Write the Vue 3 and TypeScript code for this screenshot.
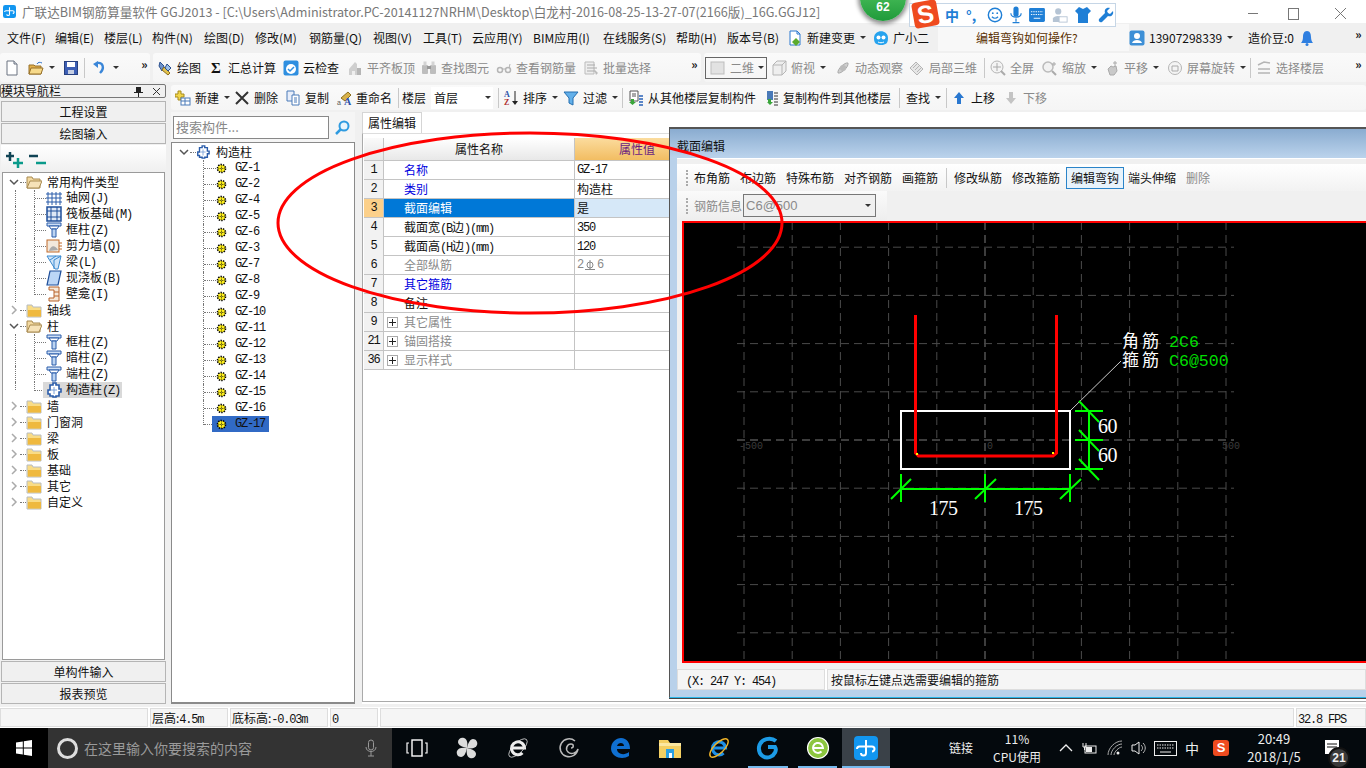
<script setup lang="ts">
type Cell = {
  x: number
  w?: number
  icon?: string
  label?: string
  caret?: boolean
  off?: boolean
  sep?: boolean
  cls?: string
}

const icons: Record<string, string> = {
  newdoc: '<path d="M3 1h7l3 3v11H3z" fill="#fff" stroke="#6b7280"/><path d="M10 1v3h3" fill="#d8dde6" stroke="#6b7280"/>',
  open: '<path d="M1 5h5l1 1h6v8H1z" fill="#e3b04b" stroke="#96702a"/><path d="M3 8h12l-2 6H1z" fill="#f6d98a" stroke="#96702a"/><path d="M9 4c1-2 3-2 5-1" fill="none" stroke="#2a6fc9"/>',
  save: '<rect x="1.5" y="1.5" width="13" height="13" fill="#3d5fb5" stroke="#27407f"/><rect x="4" y="2" width="8" height="5" fill="#fff"/><rect x="5" y="10" width="6" height="4" fill="#c6cfe3"/>',
  undo: '<path d="M5 3c6-1 8 5 3 10" fill="none" stroke="#3a86d8" stroke-width="2.4"/><path d="M1 4l5-3v7z" fill="#3a86d8"/>',
  draw: '<path d="M3 2l4 4-2 5-3-5z" fill="#6f93c9" stroke="#2a4f8d"/><path d="M7 7l6 6-2 2-6-5z" fill="#e2c24e" stroke="#8c6f1f"/><path d="M10 4l4 4-3 3-3-3z" fill="#9cc0e8" stroke="#2a4f8d"/>',
  sigma: '<text x="8" y="13" text-anchor="middle" font-family="Liberation Serif,serif" font-weight="700" font-size="15" fill="#111">Σ</text>',
  cloud: '<rect x="0.5" y="0.5" width="15" height="15" rx="2" fill="#2f8fe0"/><circle cx="8" cy="9" r="5" fill="#fff"/><path d="M5 9l2 2 4-4" fill="none" stroke="#2f8fe0" stroke-width="1.5"/>',
  flat: '<path d="M2 15V9l6-7 2 2v11z" fill="#cfcfcf"/><path d="M10 8h4v7h-4z" fill="#b5b5b5"/><path d="M5 11h3v4H5z" fill="#eee"/>',
  binoc: '<rect x="1" y="5" width="6" height="9" rx="1" fill="#bdbdbd"/><rect x="9" y="5" width="6" height="9" rx="1" fill="#bdbdbd"/><rect x="2.5" y="1.5" width="3" height="4" fill="#d4d4d4"/><rect x="10.5" y="1.5" width="3" height="4" fill="#d4d4d4"/><rect x="6" y="6" width="4" height="3" fill="#999"/>',
  glasses: '<circle cx="4" cy="10" r="2.5" fill="none" stroke="#b5b5b5" stroke-width="1.5"/><circle cx="12" cy="10" r="2.5" fill="none" stroke="#b5b5b5" stroke-width="1.5"/><path d="M6 9h4M13 8l1-4" stroke="#b5b5b5" fill="none"/>',
  batch: '<path d="M2 2h9v12H2z" fill="#eee" stroke="#bbb"/><path d="M4 5h8M4 8h10M4 11h8" stroke="#aaa"/><path d="M11 9l4 4-2 2z" fill="#bbb"/>',
  box: '<path d="M2 5l4-4h9v10l-4 4H2z" fill="#eee" stroke="#b5b5b5"/><path d="M2 5h9v10M11 5l4-4" fill="none" stroke="#b5b5b5"/>',
  orbit: '<path d="M3 13C6 14 14 7 13 3 10 2 2 9 3 13z" fill="#cfcfcf" stroke="#aaa"/><circle cx="8" cy="8" r="3" fill="#bbb"/>',
  local: '<path d="M1 8l6-6 7 7-6 6z" fill="#e6e6e6" stroke="#b5b5b5"/><path d="M4 8l4-4M6 10l4-4M8 12l4-4" stroke="#b5b5b5"/>',
  fit: '<circle cx="7" cy="7" r="6" fill="#f4f4f4" stroke="#b5b5b5"/><path d="M7 3v8M3 7h8" stroke="#aaa"/><path d="M11 11l4 4" stroke="#aaa" stroke-width="2"/>',
  zoom: '<circle cx="6" cy="7" r="5" fill="#f2f2f2" stroke="#bbb" stroke-width="1.5"/><path d="M10 11l4 4" stroke="#aaa" stroke-width="2"/><path d="M12 2v4M10 4h4" stroke="#aaa"/>',
  pan: '<path d="M4 9l3-3 2 1 3-1 1 5-3 4H6z" fill="#c9c9c9" stroke="#aaa"/><path d="M11 1v5M9 3h4" stroke="#aaa"/>',
  rotate: '<circle cx="8" cy="8" r="6.5" fill="#f4f4f4" stroke="#b5b5b5"/><path d="M5 6h6v5H5z" fill="none" stroke="#aaa"/>',
  floors: '<path d="M2 5l6-3 6 1M2 9h12M2 13h12" fill="none" stroke="#b5b5b5" stroke-width="1.5"/>',
  add: '<path d="M3 1h3v3h3v3H6v3H3V7H0V4h3z" fill="#f2d64b" stroke="#a68a1c"/><rect x="6" y="8" width="9" height="7" fill="#fff" stroke="#4a7ab8"/><path d="M6 11h9M10 8v7" stroke="#4a7ab8"/>',
  del: '<path d="M2 2l12 12M14 2L2 14" stroke="#333" stroke-width="2"/>',
  copy: '<path d="M2 1h7v10H2z" fill="#e8eefa" stroke="#4a7ab8"/><path d="M7 5h7v10H7z" fill="#fff" stroke="#4a7ab8"/><path d="M9 8h3M9 10h3M9 12h3" stroke="#4a7ab8"/>',
  rename: '<path d="M5 8l7-6 3 3-6 6z" fill="#d8b24a" stroke="#8c6f1f"/><text x="1" y="15" font-family="Liberation Sans,sans-serif" font-size="7" fill="#555">a</text><text x="8" y="15" font-family="Liberation Serif,serif" font-weight="700" font-size="10" fill="#2a4fa8">A</text>',
  sort: '<text x="1" y="7" font-family="Liberation Serif,serif" font-weight="700" font-size="8" fill="#2a4fa8">A</text><text x="1" y="15" font-family="Liberation Serif,serif" font-weight="700" font-size="8" fill="#b03030">Z</text><path d="M12 1v12" stroke="#222"/><path d="M9 11l3 4 3-4z" fill="#222"/>',
  filter: '<path d="M1 2h14l-5 6v7l-4-2V8z" fill="#63b0ea" stroke="#256fb0"/>',
  cfrom: '<path d="M2 1h8v10H2z" fill="#fff" stroke="#555"/><path d="M4 4h4M4 6h4" stroke="#555"/><path d="M3 9h3v3h2l-3.5 3L1 12h2z" fill="#3aa53a"/><path d="M11 6h4M11 9h4M11 12h4M11 15h4" stroke="#2a62b8" stroke-width="1.5"/>',
  cto: '<rect x="4" y="1" width="6" height="9" fill="#4a7ab8"/><path d="M5 9h3v3h2l-3 3-3-3h1z" fill="#3aa53a"/><path d="M11 3h4M11 6h4M11 9h4M11 12h4M11 15h4" stroke="#333"/>',
  up: '<path d="M8 2l5 6H10v6H6V8H3z" fill="#2a78d0"/>',
  down: '<path d="M8 14l5-6H10V2H6v6H3z" fill="#c4c4c4"/>',
  docnew: '<path d="M3 1h7l3 3v11H3z" fill="#fff" stroke="#2a78d0"/><path d="M10 1v3h3" fill="none" stroke="#2a78d0"/><path d="M9 8l4 4-4 4-4-4z" fill="#5cab2e"/>',
  xiaoer: '<path d="M1 8c0-9 14-9 14 0 0 5-2 7-7 7s-7-2-7-7z" fill="#27a3ee"/><circle cx="5.5" cy="7.5" r="2" fill="#fff"/><circle cx="10.5" cy="7.5" r="2" fill="#fff"/><path d="M5 12c2 1 4 1 6 0" stroke="#fff" fill="none"/>',
  user: '<rect x="0.5" y="0.5" width="15" height="15" rx="2" fill="#3d8fd6"/><circle cx="8" cy="6" r="3" fill="#fff"/><path d="M3 13c1-4 9-4 10 0z" fill="#fff"/>',
  bell: '<path d="M8 1c3 0 4 3 4 6s1 5 2 6H2c1-1 2-3 2-6s1-6 4-6z" fill="#2f7fe0"/><circle cx="8" cy="14.5" r="1.5" fill="#2f7fe0"/>',
  square: '<rect x="1" y="2" width="13" height="12" fill="#e2e2e2" stroke="#bdbdbd"/>',
  grid: '<path d="M2 2v13M6 2v13M10 2v13M14 2v13M0 4h16M0 8h16M0 12h16" stroke="#2a5caa"/>',
  raft: '<rect x="1" y="1" width="14" height="14" fill="#dfe8f6" stroke="#1f4f9a" stroke-width="1.5"/><path d="M1 5h14M1 11h14M5 1v14M11 1v14" stroke="#1f4f9a"/>',
  column: '<path d="M1 1h14v3H1z" fill="#cfe0f6" stroke="#2a5caa"/><path d="M3 4h10l-2 3H5z" fill="#fff" stroke="#2a5caa"/><path d="M6 7h4v8H6z" fill="#bcd4f2" stroke="#2a5caa"/>',
  wall: '<rect x="1" y="2" width="12" height="12" fill="#f2e8dc" stroke="#c06a2a"/><path d="M3 13c2-6 6-6 9-1z" fill="#aaa"/><path d="M13 5h3M13 8h3M13 11h3" stroke="#c06a2a"/>',
  beam: '<path d="M1 2h14l-3 13H9z" fill="#cfe4f8" stroke="#3a8ad0"/><path d="M4 6l6-4M8 15V6l7-4" fill="none" stroke="#3a8ad0"/>',
  slab: '<path d="M4 1h11l-3 14H1z" fill="#bcd6f6" stroke="#1f4f9a" stroke-width="1.2"/>',
  niche: '<path d="M3 1h10v14H3v-3h5V4H3z" fill="#f6e8d8" stroke="#b8622a"/><path d="M8 6h5M8 10h5" stroke="#b8622a"/>',
  puzzle: '<path d="M4 3h3V1h3v2h3v4h2v3h-2v4h-3v1H7v-1H4v-2H2V8h2z" fill="#fff" stroke="#2a5caa" stroke-width="1.6"/><path d="M8 5v7M5 8h6" stroke="#7aa0d8"/>',
  gear: '<circle cx="8" cy="8" r="5.5" fill="#ffef1a" stroke="#000" stroke-width="3" stroke-dasharray="2 1.4"/><circle cx="8" cy="8" r="4.6" fill="#ffef1a"/><path d="M8 3.5v9M3.5 8h9" stroke="#111" stroke-dasharray="1.5 1"/>',
  folderopen: '<path d="M1 3h5l1 2h7v9H1z" fill="#f3d9a0" stroke="#a88a50"/><path d="M4 7h12l-3 7H1z" fill="#f6e2b8" stroke="#a88a50"/>',
}

const cells = (items: Cell[], end: number): Cell[] =>
  items.map((it, i) => ({ ...it, w: (items[i + 1]?.x ?? end) - it.x }))

const menu = cells([
  { x: 7, label: '文件(F)' }, { x: 55, label: '编辑(E)' }, { x: 104, label: '楼层(L)' },
  { x: 152, label: '构件(N)' }, { x: 204, label: '绘图(D)' }, { x: 255, label: '修改(M)' },
  { x: 309, label: '钢筋量(Q)' }, { x: 373, label: '视图(V)' }, { x: 423, label: '工具(T)' },
  { x: 472, label: '云应用(Y)' }, { x: 533, label: 'BIM应用(I)' }, { x: 603, label: '在线服务(S)' },
  { x: 676, label: '帮助(H)' }, { x: 727, label: '版本号(B)' },
  { x: 787, icon: 'docnew', label: '新建变更', caret: true }, { x: 873, icon: 'xiaoer', label: '广小二' },
  { x: 938, label: '编辑弯钩如何操作?', cls: 'ask' },
  { x: 1129, icon: 'user', label: '13907298339', caret: true }, { x: 1248, label: '造价豆:0' },
  { x: 1299, icon: 'bell' }, { x: 1351, label: '»', cls: 'more' },
], 1366)

// three docked groups on the upper toolbar
const tb1 = [
  {
    id: 'file',
    width: 150,
    items: cells([
      { x: 4, icon: 'newdoc' }, { x: 28, icon: 'open', caret: true }, { x: 63, icon: 'save' },
      { x: 84, sep: true }, { x: 92, icon: 'undo', caret: true }, { x: 139, label: '»', cls: 'more' },
    ], 150),
  },
  {
    id: 'draw',
    width: 548,
    items: cells([
      { x: 157, icon: 'draw', label: '绘图' }, { x: 208, icon: 'sigma', label: '汇总计算' },
      { x: 283, icon: 'cloud', label: '云检查' }, { x: 347, icon: 'flat', label: '平齐板顶', off: true },
      { x: 421, icon: 'binoc', label: '查找图元', off: true }, { x: 496, icon: 'glasses', label: '查看钢筋量', off: true },
      { x: 583, icon: 'batch', label: '批量选择', off: true }, { x: 688, label: '»', cls: 'more' },
    ], 701),
  },
  {
    id: 'view',
    width: 663,
    items: cells([
      { x: 705, icon: 'square', label: '二维', caret: true, off: true, cls: 'combo' },
      { x: 771, icon: 'box', label: '俯视', caret: true, off: true }, { x: 835, icon: 'orbit', label: '动态观察', off: true },
      { x: 909, icon: 'local', label: '局部三维', off: true }, { x: 984, sep: true },
      { x: 990, icon: 'fit', label: '全屏', off: true }, { x: 1042, icon: 'zoom', label: '缩放', caret: true, off: true },
      { x: 1104, icon: 'pan', label: '平移', caret: true, off: true }, { x: 1167, icon: 'rotate', label: '屏幕旋转', caret: true, off: true },
      { x: 1250, sep: true }, { x: 1256, icon: 'floors', label: '选择楼层', off: true }, { x: 1351, label: '»', cls: 'more' },
    ], 1366),
  },
]

const tb2 = cells([
  { x: 175, icon: 'add', label: '新建', caret: true }, { x: 234, icon: 'del', label: '删除' },
  { x: 285, icon: 'copy', label: '复制' }, { x: 336, icon: 'rename', label: '重命名' },
  { x: 398, sep: true }, { x: 402, label: '楼层' }, { x: 431, label: '首层', caret: true, cls: 'floor' },
  { x: 498, sep: true }, { x: 503, icon: 'sort', label: '排序', caret: true },
  { x: 563, icon: 'filter', label: '过滤', caret: true }, { x: 622, sep: true },
  { x: 628, icon: 'cfrom', label: '从其他楼层复制构件' }, { x: 763, icon: 'cto', label: '复制构件到其他楼层' },
  { x: 899, sep: true }, { x: 906, label: '查找', caret: true }, { x: 946, sep: true },
  { x: 951, icon: 'up', label: '上移' }, { x: 1003, icon: 'down', label: '下移', off: true },
], 1366)

const dlgTools = cells([
  { x: 694, label: '布角筋' }, { x: 740, label: '布边筋' }, { x: 786, label: '特殊布筋' },
  { x: 844, label: '对齐钢筋' }, { x: 902, label: '画箍筋' }, { x: 946, sep: true },
  { x: 954, label: '修改纵筋' }, { x: 1012, label: '修改箍筋' }, { x: 1066, label: '编辑弯钩', cls: 'active' },
  { x: 1128, label: '端头伸缩' }, { x: 1186, label: '删除', off: true },
], 1366)

type Node = { name: string; key?: string; icon?: string; open?: boolean; cur?: boolean; last?: boolean; guide?: boolean }
const navTree: Node[] = [
  { name: '常用构件类型', open: true },
  { name: '轴网', key: '(J)', icon: 'grid', guide: true },
  { name: '筏板基础', key: '(M)', icon: 'raft', guide: true },
  { name: '框柱', key: '(Z)', icon: 'column', guide: true },
  { name: '剪力墙', key: '(Q)', icon: 'wall', guide: true },
  { name: '梁', key: '(L)', icon: 'beam', guide: true },
  { name: '现浇板', key: '(B)', icon: 'slab', guide: true },
  { name: '壁龛', key: '(I)', icon: 'niche', guide: true, last: true },
  { name: '轴线' },
  { name: '柱', open: true },
  { name: '框柱', key: '(Z)', icon: 'column', guide: true },
  { name: '暗柱', key: '(Z)', icon: 'column', guide: true },
  { name: '端柱', key: '(Z)', icon: 'column', guide: true },
  { name: '构造柱', key: '(Z)', icon: 'puzzle', guide: true, last: true, cur: true },
  { name: '墙' }, { name: '门窗洞' }, { name: '梁' }, { name: '板' },
  { name: '基础' }, { name: '其它' }, { name: '自定义' },
]
const columns = [1, 2, 4, 5, 6, 3, 7, 8, 9, 10, 11, 12, 13, 14, 15, 16, 17].map((n) => `GZ-${n}`)

type Row = { no: number; name: string; value?: string; tone?: string; plus?: boolean; cur?: boolean; mono?: boolean; bar?: boolean }
const rows: Row[] = [
  { no: 1, name: '名称', value: 'GZ-17', tone: 'link', mono: true },
  { no: 2, name: '类别', value: '构造柱', tone: 'link' },
  { no: 3, name: '截面编辑', value: '是', cur: true },
  { no: 4, name: '截面宽(B边)(mm)', value: '350', mono: true },
  { no: 5, name: '截面高(H边)(mm)', value: '120', mono: true },
  { no: 6, name: '全部纵筋', tone: 'dim', bar: true },
  { no: 7, name: '其它箍筋', tone: 'link' },
  { no: 8, name: '备注' },
  { no: 9, name: '其它属性', tone: 'dim', plus: true },
  { no: 21, name: '锚固搭接', tone: 'dim', plus: true },
  { no: 36, name: '显示样式', tone: 'dim', plus: true },
]
// ascii runs use the half-width face
const parts = (s: string) =>
  s.split(/([\x20-\x7e]+)/).filter(Boolean).map((t) => ({ t, mono: /^[\x20-\x7e]/.test(t) }))

const gridX = Array.from({ length: 11 }, (_, i) => 985 + (i - 5) * 48.2)
const gridY = Array.from({ length: 9 }, (_, i) => 440 + (i - 4) * 48.2)

const apps = [
  { w: 49, icon: 'taskview' }, { w: 51, icon: 'fan' }, { w: 51, icon: 'ieblack' }, { w: 51, icon: 'swirl' },
  { w: 52, icon: 'edge' }, { w: 48, icon: 'files' }, { w: 49, icon: 'iecolor' }, { w: 50, icon: 'g', run: true },
  { w: 49, icon: 'greene', run: true }, { w: 48, icon: 'glodon', active: true },
]
const petal = 'M12 12C7 11 3 9 3 6s3-5 6-4 4 5 3 10z'
const appIcons: Record<string, string> = {
  taskview: '<rect x="7" y="4" width="10" height="16" fill="none" stroke="#fff" stroke-width="1.4"/><path d="M4 7H2v10h2M20 7h2v10h-2" fill="none" stroke="#fff" stroke-width="1.2"/>',
  fan: [0, 90, 180, 270].map((a) => `<path d="${petal}" fill="#dcdcdc" transform="rotate(${a} 12 12)"/>`).join(''),
  ieblack: '<path d="M5.5 12h13a6.500 6.500 0 1 0-2 5" fill="none" stroke="#eee" stroke-width="3"/><ellipse cx="12" cy="12" rx="12" ry="5" transform="rotate(-45 12 12)" fill="none" stroke="#ddd" stroke-width="0.8"/>',
  swirl: '<path d="M18 5a9 9 0 1 0 3 8c-1 4-7 6-10 3s-1-8 3-8c3 0 3 4 0 4" fill="none" stroke="#bbb" stroke-width="1.5"/>',
  edge: '<path d="M3 13C3 6 8 2 13 2c6 0 9 5 9 11H9c0 5 7 7 12 3v4c-6 4-17 2-18-7zm6-3h7c0-4-6-4-7 0z" fill="#0f6fd1"/>',
  files: '<path d="M1 4h9l2 3h11v15H1z" fill="#f4cf62"/><path d="M1 7h22v3H1z" fill="#fbe7a1"/><rect x="8" y="13" width="8" height="9" fill="#2a9fe3"/><rect x="11" y="17" width="3" height="5" fill="#fff"/>',
  iecolor: '<path d="M5.5 12h13a6.500 6.500 0 1 0-2 5" fill="none" stroke="#1e90e6" stroke-width="3.2"/><ellipse cx="12" cy="12" rx="12" ry="5" transform="rotate(-45 12 12)" fill="none" stroke="#f0b429" stroke-width="1.4"/>',
  g: '<path d="M20 5C15 1 5 2 3 11c-1 8 6 12 11 10 5-2 7-7 5-10h-7" fill="none" stroke="#1c9be6" stroke-width="4"/>',
  greene: '<circle cx="12" cy="12" r="10.5" fill="#8cc63f" stroke="#fff" stroke-width="1.2"/><path d="M7 12h10a5 5 0 1 0-1.500 3.500" fill="none" stroke="#fff" stroke-width="2"/>',
  glodon: '<rect x="0" y="0" width="24" height="24" rx="4" fill="#1296f0"/><path d="M12 4v13a2.500 2.500 0 0 1-5 0M3 13a2.500 2.500 0 0 1 2.500-2.500H18a2.500 2.500 0 0 1 0 5" fill="none" stroke="#fff" stroke-width="2"/>',
}
</script>

<template>
  <div class="screen">
    <div class="title">
      <svg class="logo" viewBox="0 0 24 24" v-html="appIcons.glodon" />
      <span>广联达BIM钢筋算量软件 GGJ2013 - [C:\Users\Administrator.PC-20141127NRHM\Desktop\白龙村-2016-08-25-13-27-07(2166版)_16G.GGJ12]</span>
      <div class="win-btns">
        <i class="w-min" />
        <i class="w-max" />
        <svg width="13" height="13" viewBox="0 0 13 13"><path d="M1 1l11 11M12 1L1 12" stroke="#777" /></svg>
      </div>
    </div>

    <div class="menu">
      <div v-for="it in menu" :key="it.x" class="tool" :class="[it.cls, { off: it.off }]" :style="{ width: it.w + 'px' }">
        <svg v-if="it.icon" class="ic" viewBox="0 0 16 16" v-html="icons[it.icon]" />
        <span v-if="it.label">{{ it.label }}</span>
        <b v-if="it.caret" class="caret" />
      </div>
    </div>

    <div class="tools">
      <div v-for="g in tb1" :key="g.id" class="grp" :class="g.id" :style="{ width: g.width + 'px' }">
        <div v-for="it in g.items" :key="it.x" class="tool" :class="[it.cls, { off: it.off }]" :style="{ width: it.w + 'px' }">
          <i v-if="it.sep" class="sep" />
          <svg v-if="it.icon" class="ic" viewBox="0 0 16 16" v-html="icons[it.icon]" />
          <span v-if="it.label">{{ it.label }}</span>
          <b v-if="it.caret" class="caret" />
        </div>
      </div>
    </div>

    <div class="main">
      <aside class="nav">
        <div class="nav-head">
          <span>模块导航栏</span>
          <span class="nav-pin">
            <svg width="9" height="11" viewBox="0 0 9 11"><path d="M2 1h5v5h2v1H5v4H4V7H0V6h2z" fill="#222" /></svg>
            <svg width="9" height="9" viewBox="0 0 9 9"><path d="M1 1l7 7M8 1L1 8" stroke="#333" /></svg>
          </span>
        </div>
        <div class="nav-btn">工程设置</div>
        <div class="nav-btn">绘图输入</div>
        <div class="nav-strip">
          <svg width="17" height="16" viewBox="0 0 17 16"><path d="M4 0v9M0 4h8" stroke="#145" stroke-width="2.5" /><path d="M12 6v10M7 11h10" stroke="#0a9a8a" stroke-width="2.5" /></svg>
          <svg width="17" height="16" viewBox="0 0 17 16"><path d="M0 4h9" stroke="#145" stroke-width="2.5" /><path d="M7 11h10" stroke="#0a9a8a" stroke-width="2.5" /></svg>
        </div>
        <div class="nav-tree">
          <div v-for="(n, i) in navTree" :key="i" class="row" :class="{ leaf: n.guide }">
            <template v-if="n.guide">
              <i class="guide" :class="{ end: n.last && n.cur }" />
              <i class="branch" :class="{ end: n.last }"><i /></i>
              <span class="leaf-body" :class="{ cur: n.cur }">
                <svg class="ic" viewBox="0 0 16 16" v-html="icons[n.icon!]" />
                <span class="name">{{ n.name }}<span class="mono">{{ n.key }}</span></span>
              </span>
            </template>
            <template v-else>
              <svg class="chev" width="10" height="10" viewBox="0 0 10 10">
                <path :d="n.open ? 'M1 3l4 4 4-4' : 'M3 1l4 4-4 4'" fill="none" :stroke="n.open ? '#555' : '#aaa'" stroke-width="1.5" />
              </svg>
              <i class="stub" />
              <svg v-if="n.open" class="ic" viewBox="0 0 16 16" v-html="icons.folderopen" />
              <svg v-else class="ic" viewBox="0 0 16 16"><path d="M1 3h5l1 2h8v10H1z" fill="#f9dc86" stroke="#b8bcc0" /><path d="M2 8h13v6.5H2z" fill="#efb93f" /></svg>
              <span class="name">{{ n.name }}</span>
            </template>
          </div>
        </div>
        <div class="nav-btn">单构件输入</div>
        <div class="nav-btn">报表预览</div>
      </aside>

      <div class="work">
        <div class="grp second">
          <div v-for="it in tb2" :key="it.x" class="tool" :class="[it.cls, { off: it.off }]" :style="{ width: it.w + 'px' }">
            <i v-if="it.sep" class="sep" />
            <svg v-if="it.icon" class="ic" viewBox="0 0 16 16" v-html="icons[it.icon]" />
            <span v-if="it.label">{{ it.label }}</span>
            <b v-if="it.caret" class="caret" />
          </div>
        </div>
        <div class="panes">
          <section class="list">
            <div class="search">
              <div class="search-box">搜索构件...</div>
              <svg width="17" height="17" viewBox="0 0 17 17"><circle cx="10" cy="7" r="4.5" fill="#e8f5fd" stroke="#2f9be0" stroke-width="2" /><path d="M7 10l-5 5" stroke="#2f9be0" stroke-width="2.5" /></svg>
            </div>
            <div class="list-tree">
              <div class="row">
                <svg class="chev" width="10" height="10" viewBox="0 0 10 10"><path d="M1 3l4 4 4-4" fill="none" stroke="#555" stroke-width="1.5" /></svg>
                <i class="stub" />
                <svg class="ic" viewBox="0 0 16 16" v-html="icons.puzzle" />
                <span class="name">构造柱</span>
              </div>
              <div v-for="(c, i) in columns" :key="c" class="row col-row">
                <i class="branch" :class="{ end: i === columns.length - 1 }"><i /></i>
                <span class="col-body" :class="{ cur: i === columns.length - 1 }">
                  <svg class="gear" viewBox="0 0 16 16" v-html="icons.gear" />
                  <span class="mono">{{ c }}</span>
                </span>
              </div>
            </div>
          </section>

          <section class="props">
            <div class="tab">属性编辑</div>
            <div class="sheet">
              <div class="sheet-row head">
                <div class="no" />
                <div class="name-cell">属性名称</div>
                <div class="val-cell">属性值</div>
              </div>
              <div v-for="r in rows" :key="r.no" class="sheet-row" :class="[r.tone, { cur: r.cur }]">
                <div class="no mono">{{ r.no }}</div>
                <div class="name-cell">
                  <i v-if="r.plus" class="plus" />
                  <span><span v-for="p in parts(r.name)" :key="p.t" :class="{ mono: p.mono }">{{ p.t }}</span></span>
                </div>
                <div class="val-cell" :class="{ mono: r.mono }">
                  <template v-if="r.bar">
                    <span class="mono">2</span>
                    <svg width="12" height="10" viewBox="0 0 12 10"><circle cx="6" cy="5" r="3" fill="none" stroke="#888" /><path d="M6 0v10M1 9.5h10" stroke="#888" /></svg>
                    <span class="mono">6</span>
                  </template>
                  <template v-else>{{ r.value }}</template>
                </div>
              </div>
            </div>
          </section>
        </div>
      </div>
    </div>

    <div class="status">
      <div class="st s0" />
      <div class="st s1">层高:<span class="mono">4.5m</span></div>
      <div class="st s2">底标高:<span class="mono">-0.03m</span></div>
      <div class="st s3"><span class="mono">0</span></div>
      <div class="st s4" />
      <div class="st s5"><span class="mono">32.8 FPS</span></div>
    </div>

    <div class="taskbar">
      <div class="start">
        <svg width="16" height="16" viewBox="0 0 16 16"><path d="M0 2.5l6.8-1v6H0zM7.8 1.3L16 0v7.500H7.800zM0 8.500h6.800v6l-6.800-1zM7.800 8.500H16V16l-8.200-1.300z" fill="#fff" /></svg>
      </div>
      <div class="cortana">
        <i class="ring" />
        <span>在这里输入你要搜索的内容</span>
        <svg class="mic" width="12" height="18" viewBox="0 0 12 18"><rect x="3.5" y="1" width="5" height="10" rx="2.5" fill="none" stroke="#999" /><path d="M1 8c0 6 10 6 10 0M6 13v4M3 17h6" fill="none" stroke="#999" /></svg>
      </div>
      <div v-for="a in apps" :key="a.icon" class="app" :class="{ run: a.run, active: a.active }" :style="{ width: a.w + 'px' }">
        <svg width="24" height="24" viewBox="0 0 24 24" v-html="appIcons[a.icon]" />
      </div>
      <div class="tray">
        <span class="t-link">链接</span>
        <div class="t-cpu"><span>11%</span><span>CPU使用</span></div>
        <svg class="t-i" width="14" height="16" viewBox="0 0 14 16"><path d="M1 11l6-6 6 6" fill="none" stroke="#eee" stroke-width="1.3" /></svg>
        <svg class="t-i bat" width="16" height="16" viewBox="0 0 16 16"><rect x="4" y="6" width="11" height="7" fill="none" stroke="#eee" /><rect x="5" y="7" width="6" height="5" fill="#eee" /><path d="M2 3v4h3V3M3.5 7v3" stroke="#eee" fill="none" /></svg>
        <svg class="t-i" width="16" height="16" viewBox="0 0 16 16"><path d="M1 15C1 8 8 1 15 1M4 15c0-5 6-11 11-11M7 15c0-3 5-8 8-8" fill="none" stroke="#aaa" /><circle cx="11" cy="13" r="1.5" fill="#eee" /></svg>
        <svg class="t-i" width="16" height="16" viewBox="0 0 16 16"><path d="M1 5h3l4-3v12l-4-3H1z" fill="none" stroke="#eee" /><path d="M10 5c2 2 2 4 0 6M12 3c3 3 3 7 0 10" fill="none" stroke="#bbb" /></svg>
        <svg class="t-i kb" width="23" height="15" viewBox="0 0 23 15"><rect x="0.5" y="0.5" width="22" height="14" fill="none" stroke="#eee" /><path d="M3 4h17M3 7h17" stroke="#eee" stroke-dasharray="1.5 1" /><path d="M6 11h11" stroke="#eee" /></svg>
        <span class="t-zh">中</span>
        <span class="t-s">S</span>
        <div class="t-clock"><span>20:49</span><span>2018/1/5</span></div>
        <div class="t-note">
          <svg width="14" height="14" viewBox="0 0 14 14"><path d="M0 0h14v14H0z" fill="#fff" /><path d="M2 4h10M2 7h10" stroke="#111" /></svg>
          <b>21</b>
        </div>
      </div>
    </div>

    <!-- floating section editor window -->
    <div class="dialog">
      <div class="dlg-title">截面编辑</div>
      <div class="dlg-body">
        <div class="dlg-bar">
          <i class="grip" />
          <div v-for="it in dlgTools" :key="it.x" class="tool" :class="[it.cls, { off: it.off }]" :style="{ width: it.w + 'px' }">
            <i v-if="it.sep" class="sep" />
            <span v-if="it.label">{{ it.label }}</span>
          </div>
        </div>
        <div class="dlg-bar info">
          <i class="grip" />
          <span>钢筋信息</span>
          <div class="rebar-combo">C6@500<b class="caret" /></div>
        </div>
        <div class="canvas">
          <svg width="682" height="438" viewBox="684 223 682 438">
            <g fill="none" stroke="#4b4b4b" stroke-dasharray="8 5">
              <path v-for="x in gridX" :key="x" :d="`M${x} 222V660`" :stroke="x === 985 ? '#7a7a7a' : undefined" />
              <path v-for="y in gridY" :key="y" :d="`M737 ${y}H1234`" :stroke="y === 440 ? '#7a7a7a' : undefined" />
            </g>
            <g class="axis">
              <text x="739" y="449">-500</text>
              <text x="987" y="449">0</text>
              <text x="1222" y="449">500</text>
            </g>
            <rect x="901" y="411" width="169" height="58" fill="none" stroke="#fff" stroke-width="2" />
            <path d="M915.5 315V453L918.5 456H1053L1056.5 453V315" fill="none" stroke="#f00" stroke-width="3" />
            <path d="M916 453h2v2h-2zM1052 452h2v2h-2z" fill="#ff0" />
            <path d="M1071 410L1121 361" stroke="#fff" stroke-width="0.8" />
            <g fill="none" stroke="#0f0" stroke-width="2">
              <path d="M1089 411V469M1075 411H1103M1075 440H1103M1075 469H1103M1079 401L1099 422M1079 430L1099 451M1079 459L1099 480" />
              <path d="M901 489H1070M901 474V502M985 474V502M1070 474V502M891 499L911 479M975 499L996 479M1060 499L1081 479" />
            </g>
            <g class="note">
              <text x="1122" y="347">角筋</text>
              <text x="1122" y="366">箍筋</text>
              <text class="mark" x="1169" y="347">2C6</text>
              <text class="mark" x="1169" y="366">C6@500</text>
            </g>
            <g class="dims">
              <text x="1098" y="433">60</text>
              <text x="1098" y="462">60</text>
              <text x="929" y="515">175</text>
              <text x="1014" y="515">175</text>
            </g>
          </svg>
        </div>
        <div class="dlg-status">
          <div class="ds-a"><span class="mono">(X: 247 Y: 454)</span></div>
          <div class="ds-b">按鼠标左键点选需要编辑的箍筋</div>
        </div>
      </div>
    </div>

    <!-- hand-drawn annotation over the screenshot -->
    <svg class="scribble" width="1366" height="768" viewBox="0 0 1366 768">
      <ellipse cx="530" cy="223" rx="252" ry="90" fill="none" stroke="#f00" stroke-width="3" />
    </svg>

    <div class="badge">62</div>

    <div class="ime">
      <span class="ime-s">S</span>
      <span class="ime-zh">中</span>
      <span class="ime-dot">°,</span>
      <svg width="16" height="16" viewBox="0 0 18 18"><circle cx="9" cy="9" r="7.5" fill="none" stroke="#1f7fd6" stroke-width="1.6" /><circle cx="6.5" cy="7" r="1" fill="#1f7fd6" /><circle cx="11.5" cy="7" r="1" fill="#1f7fd6" /><path d="M5.5 11c2 2 5 2 7 0" fill="none" stroke="#1f7fd6" stroke-width="1.3" /></svg>
      <svg width="12" height="18" viewBox="0 0 14 20"><rect x="4" y="0" width="6" height="12" rx="3" fill="#1f7fd6" /><path d="M1 8c0 6 12 6 12 0M7 14v4M3 19h8" fill="none" stroke="#1f7fd6" stroke-width="1.4" /></svg>
      <svg width="16" height="14" viewBox="0 0 17 15"><rect width="17" height="15" rx="1.5" fill="#1f7fd6" /><path d="M2 4h13M2 7h13" stroke="#fff" stroke-dasharray="1.5 1" /><path d="M5 11h7" stroke="#fff" /></svg>
      <svg width="16" height="16" viewBox="0 0 18 18"><circle cx="7" cy="5" r="3.5" fill="#b5c4d4" /><path d="M1 13c1-4 10-4 11 0v4H1z" fill="#b5c4d4" /><rect x="8" y="11" width="9" height="6" fill="#fff" stroke="#b5c4d4" /></svg>
      <svg width="16" height="16" viewBox="0 0 16 16"><path d="M4 0l4 2 4-2 4 4-3 3v9H3V7L0 4z" fill="#1f7fd6" /></svg>
      <svg width="16" height="16" viewBox="0 0 16 16"><path d="M15 4l-3 3-2-1-1-2 3-3C8 0 6 3 7 6L1 12c-1 2 1 4 3 3l6-6c3 1 6-1 5-5z" fill="#1f7fd6" /></svg>
    </div>
  </div>
</template>

<style scoped>
.screen {
  position: relative;
  width: 1366px;
  height: 768px;
  display: flex;
  flex-direction: column;
  overflow: hidden;
  background: #f0f0f0;
  color: #111;
  font: 12px/16px "Noto Sans CJK SC", "Liberation Sans", sans-serif;
}
i { display: block; font-style: normal; }
.mono { font-family: "Liberation Mono", "Noto Sans CJK SC", monospace; font-size: 12px; letter-spacing: -1.2px; }

.title {
  height: 23px;
  flex: none;
  display: flex;
  align-items: center;
  padding-left: 3px;
  gap: 6px;
  background: #fff;
  color: #777;
  font-size: 12.6px;
  white-space: nowrap;
}
.logo { width: 13px; height: 13px; }
.win-btns {
  position: absolute;
  right: 19px;
  top: 7px;
  display: flex;
  align-items: center;
  gap: 30px;
}
.w-min { width: 10px; height: 1px; background: #777; }
.w-max { width: 9px; height: 10px; border: 1px solid #777; margin-right: 5px; }

.menu, .tools {
  display: flex;
  align-items: center;
  flex: none;
  box-sizing: border-box;
}
.menu { height: 29px; padding-left: 7px; }
.tools { height: 31px; gap: 3px; }

.grp {
  height: 29px;
  flex: none;
  display: flex;
  align-items: center;
  box-sizing: border-box;
  border-radius: 3px;
  background: linear-gradient(#fafafa, #f5f5f5);
}
.grp.file { padding-left: 4px; }
.grp.draw { padding-left: 4px; }
.grp.view { padding-left: 1px; }
.grp.second { height: 25px; margin: 2px 0 0 3px; padding-left: 4px; }

.tool {
  height: 22px;
  flex: none;
  display: flex;
  align-items: center;
  gap: 4px;
  white-space: nowrap;
  box-sizing: border-box;
}
.tool.off { color: #8a8a8a; }
.tool.more { font-weight: 700; justify-content: center; margin-top: -8px; }
.tool.ask { background: #f8f8f8; height: 27px; padding-left: 38px; color: #5a3000; }
.tool.combo {
  border: 1px solid #666;
  padding: 0 5px 0 4px;
  margin-right: 4px;
  max-width: 62px;
}
.tool.combo .caret { margin-left: auto; }
.tool.floor { background: #fff; padding-left: 3px; max-width: 62px; margin-right: 5px; }
.tool.floor .caret { margin-left: auto; margin-right: 2px; }
.tool.active { border: 1px solid #2a84c9; background: #e8f3fb; justify-content: center; max-width: 58px; margin-right: 4px; }

.ic { width: 16px; height: 16px; flex: none; }
.caret {
  width: 0;
  height: 0;
  margin-left: 1px;
  border: 3px solid transparent;
  border-top: 3px solid #333;
  border-bottom: 0;
}
.sep { width: 1px; height: 20px; background: #c8c8c8; }

.main { flex: 1; display: flex; min-height: 0; }

.nav { width: 168px; flex: none; display: flex; flex-direction: column; padding: 0 2px 3px 1px; box-sizing: border-box; }
.nav-head {
  height: 14px;
  margin: 1px 0 0 -1px;
  line-height: 12px;
  padding-right: 4px;
  box-sizing: border-box;
  flex: none;
  display: flex;
  justify-content: space-between;
  align-items: center;
  border: 1px solid #777;
  border-radius: 2px;
}
.nav-pin { display: flex; gap: 9px; align-items: center; }
.nav-btn {
  height: 21px;
  margin-top: 1px;
  line-height: 19px;
  box-sizing: border-box;
  text-align: center;
  background: #f0f0f0;
  border: 1px solid #b5b5b5;
  flex: none;
}
.nav-head + .nav-btn { margin-top: 3px; }
.nav-strip {
  height: 26px;
  margin-top: 1px;
  padding: 3px 0 0 5px;
  box-sizing: border-box;
  flex: none;
  display: flex;
  gap: 6px;
  align-items: center;
  background: linear-gradient(#fff, #f0f0f0);
}
.nav-tree {
  flex: 1;
  margin: 1px 1px 0 1px;
  padding-top: 1px;
  background: #fff;
  border: 1px solid #9a9a9a;
  min-height: 0;
}

.row { height: 16px; display: flex; align-items: center; padding-left: 6px; white-space: nowrap; }
.chev { flex: none; }
.stub { width: 6px; margin-left: 1px; border-top: 1px dotted #777; flex: none; }
.row .name { margin-left: 5px; }
.row.leaf { padding-left: 12px; }
.row.leaf .name { margin-left: 4px; }
.guide { width: 19px; height: 16px; border-left: 1px dotted #777; box-sizing: border-box; flex: none; }
.guide.end { height: 8px; align-self: flex-start; }
.branch { width: 12px; height: 16px; border-left: 1px dotted #777; box-sizing: border-box; flex: none; align-self: flex-start; }
.branch i { height: 8px; border-bottom: 1px dotted #777; }
.branch.end { height: 9px; }
.leaf-body { display: flex; align-items: center; height: 16px; flex: none; }
.leaf-body.cur { background: #d9d9d9; padding-right: 2px; margin-left: -3px; padding-left: 3px; }

.work { flex: 1; display: flex; flex-direction: column; min-width: 0; }
.panes { flex: 1; display: flex; min-height: 0; padding: 2px 0 3px 3px; }

.list { width: 184px; flex: none; display: flex; flex-direction: column; margin-right: 7px; }
.search { height: 30px; flex: none; display: flex; align-items: center; padding: 3px 0 2px 2px; box-sizing: border-box; gap: 5px; background: #f5f5f5; }
.search-box {
  width: 152px;
  height: 21px;
  line-height: 19px;
  padding-left: 2px;
  background: #fff;
  border: 1px solid #888;
  color: #888;
  font-size: 13px;
}
.list-tree { flex: 1; background: #fff; border: 1px solid #8a8a8a; border-bottom-width: 2px; padding-top: 1px; min-height: 0; }
.list-tree .row { padding-left: 7px; }
.list-tree .row .ic { width: 14px; height: 14px; }
.list-tree .name { margin-left: 6px; }
.list-tree .col-row { padding-left: 31px; }
.col-row .branch { width: 13px; }
.col-body { display: flex; align-items: center; gap: 8px; height: 16px; padding-right: 4px; margin-left: -4px; padding-left: 4px; }
.col-body.cur { background: #316ac5; }
.gear { width: 11px; height: 11px; flex: none; }

.props { flex: 1; min-width: 0; display: flex; flex-direction: column; background: #fff; }
.tab {
  width: 58px;
  height: 20px;
  line-height: 20px;
  text-align: center;
  border: 1px solid #d5d5d5;
  border-bottom: 0;
  flex: none;
}
.sheet {
  flex: 1;
  margin-bottom: 2px;
  border-top: 1px solid #ddd;
  border-left: 1px solid #aaa;
  border-bottom: 1px solid #aaa;
  padding: 4px 0 0 1px;
}
.sheet-row {
  height: 19px;
  display: grid;
  grid-template-columns: 20px 191px 1fr;
  border-bottom: 1px solid #c4c4c4;
  box-sizing: border-box;
  line-height: 18px;
}
.sheet-row.head { height: 23px; line-height: 22px; }
.no {
  background: #f2f2f2;
  border-right: 1px solid #c4c4c4;
  text-align: center;
}
.name-cell { padding-left: 20px; border-right: 1px solid #c4c4c4; display: flex; align-items: center; }
.val-cell { padding-left: 2px; display: flex; align-items: center; gap: 1px; }
.head .no { background: linear-gradient(#fafafa, #e6e6e6); }
.head .name-cell { justify-content: center; padding: 0; background: linear-gradient(#fff, #e8e8e8); }
.head .val-cell { padding-left: 44px; color: #6a1b80; background: linear-gradient(#fbdc9e, #f2bd62); }
.sheet-row.link .name-cell { color: #0000e0; }
.sheet-row.dim .name-cell, .sheet-row.dim .val-cell { color: #8a8a8a; }
.sheet-row.cur .no { background: #fcd08a; }
.sheet-row.cur .name-cell { background: #0078d7; color: #fff; }
.sheet-row.cur .val-cell { background: #d6e8f8; }
.plus {
  width: 11px;
  height: 11px;
  margin-left: -17px;
  margin-right: 6px;
  border: 1px solid #aaa;
  background:
    linear-gradient(#222, #222) center / 7px 1px no-repeat,
    linear-gradient(#222, #222) center / 1px 7px no-repeat,
    #fff;
  box-sizing: border-box;
}

.status { height: 21px; flex: none; display: flex; gap: 2px; padding-top: 1px; box-sizing: border-box; background: #fff; }
.st { height: 19px; line-height: 18px; background: #f5f5f5; border: 1px solid #ddd; box-sizing: border-box; flex: none; padding-left: 1px; white-space: nowrap; }
.s0 { width: 148px; }
.s1 { width: 78px; }
.s2 { width: 98px; }
.s3 { width: 48px; }
.s4 { width: 914px; }
.s5 { width: 70px; }

.taskbar { height: 40px; flex: none; display: flex; background: #04090d; color: #eee; }
.start { width: 48px; flex: none; display: flex; align-items: center; justify-content: center; background: #000; }
.cortana {
  width: 344px;
  flex: none;
  display: flex;
  align-items: center;
  gap: 6px;
  padding-left: 9px;
  box-sizing: border-box;
  background: #333;
  color: #9a9a9a;
  font-size: 14px;
}
.ring { width: 15px; height: 15px; border: 3px solid #ddd; border-radius: 50%; }
.mic { margin-left: 107px; }
.app { position: relative; height: 40px; flex: none; display: flex; align-items: center; justify-content: center; box-sizing: border-box; }
.app.run::after {
  content: "";
  position: absolute;
  left: 5px;
  right: 5px;
  bottom: 0;
  height: 2px;
  background: #76b9ed;
}
.app.active { background: #3a4148; box-shadow: inset 0 -2px 0 #76b9ed; }
.tray { flex: 1; display: flex; align-items: center; position: relative; }
.t-link { margin-left: 59px; width: 46px; flex: none; }
.t-cpu, .t-clock { display: flex; flex-direction: column; align-items: center; line-height: 18px; flex: none; white-space: nowrap; }
.t-cpu { width: 44px; margin-right: 20px; }
.t-i { margin-right: 8px; flex: none; }
.t-i.bat { margin-right: 10px; }
.t-i.kb { margin: 0 8px 0 -1px; }
.t-zh { width: 16px; margin-right: 12px; font-size: 14px; flex: none; }
.t-s {
  width: 16px;
  height: 16px;
  flex: none;
  text-align: center;
  border-radius: 3px;
  background: #ef4b1f;
  color: #fff;
  font: 700 13px/16px "Liberation Sans", sans-serif;
}
.t-clock { width: 62px; margin-left: 14px; font-size: 13px; }
.t-note { position: relative; margin-left: 20px; }
.t-note b {
  position: absolute;
  left: 3px;
  top: 7px;
  width: 22px;
  height: 22px;
  border-radius: 50%;
  background: #3a3a3a;
  border: 2px solid #111;
  box-sizing: border-box;
  text-align: center;
  font: 700 12px/18px "Liberation Sans", sans-serif;
}

.dialog {
  position: absolute;
  left: 669px;
  top: 127px;
  width: 697px;
  height: 571px;
  display: flex;
  flex-direction: column;
  box-sizing: border-box;
  border-top: 2px solid #555;
  border-left: 1px solid #555;
  border-bottom: 1px solid #29b6e8;
  background: #b9d1ea;
  box-shadow: 0 1px 0 #444;
}
.dlg-title {
  height: 29px;
  flex: none;
  padding: 9px 0 0 7px;
  box-sizing: border-box;
  background: linear-gradient(#8aacd0, #bbd3ec);
}
.dlg-body { flex: 1; margin: 0 0 7px 7px; display: flex; flex-direction: column; background: #f0f0f0; border-top: 1px solid #fff; padding-top: 5px; min-height: 0; }
.dlg-bar {
  height: 27px;
  flex: none;
  display: flex;
  align-items: center;
  background: linear-gradient(#fff, #f2f2f2);
  padding-left: 9px;
}
.dlg-bar.info { height: 29px; width: 201px; color: #8a8a8a; background: linear-gradient(#fafafa, #eee); }
.grip { width: 2px; height: 16px; margin-right: 6px; flex: none; border-left: 2px dotted #aaa; box-sizing: border-box; }
.rebar-combo {
  width: 133px;
  height: 23px;
  margin-left: 1px;
  padding: 0 4px 0 2px;
  flex: none;
  display: flex;
  align-items: center;
  justify-content: space-between;
  box-sizing: border-box;
  border: 1px solid #777;
  background: #f0f0f0;
  font-family: "Liberation Sans", sans-serif;
  font-size: 13px;
}
.canvas { flex: 1; margin: 1px 0 0 5px; min-height: 0; background: #000; border: 2px solid #f00; border-right: 0; overflow: hidden; }
.canvas svg { display: block; }
.axis text { font: 10px "Liberation Mono", monospace; fill: #3c3c3c; }
.note text { font: 17px "Noto Sans CJK SC", sans-serif; letter-spacing: 3px; fill: #fff; }
.note text.mark { font: 16.6px "Liberation Mono", monospace; letter-spacing: 0; fill: #00dc00; }
.dims text { font: 20px "Liberation Serif", serif; letter-spacing: -0.5px; fill: #fff; }
.dlg-status { height: 21px; margin-top: 6px; flex: none; display: flex; gap: 2px; background: #fff; }
.ds-a, .ds-b { border: 1px solid #ddd; background: #f5f5f5; line-height: 19px; padding-left: 3px; box-sizing: border-box; }
.ds-a { width: 148px; padding-left: 8px; flex: none; }
.ds-b { flex: 1; }

.scribble { position: absolute; left: 0; top: 0; pointer-events: none; }

.badge {
  position: absolute;
  left: 860px;
  top: -25px;
  width: 46px;
  height: 46px;
  border-radius: 50%;
  padding-top: 24px;
  box-sizing: border-box;
  text-align: center;
  color: #fff;
  font: 700 12px/16px "Liberation Sans", sans-serif;
  background: linear-gradient(#5fd06a, #1f9a3a);
  box-shadow: 0 1px 4px 2px rgba(0, 0, 0, 0.45);
}
.ime {
  position: absolute;
  left: 909px;
  top: 3px;
  width: 207px;
  height: 24px;
  box-sizing: border-box;
  display: flex;
  align-items: center;
  gap: 7px;
  padding-left: 35px;
  background: #fff;
  border: 1px solid #c6d6e6;
}
.ime-s {
  position: absolute;
  left: 3px;
  top: -3px;
  width: 25px;
  height: 26px;
  border-radius: 4px;
  background: #ef4b1f;
  color: #fff;
  text-align: center;
  transform: rotate(-10deg);
  font: 700 25px/26px "Liberation Sans", sans-serif;
}
.ime-zh { color: #1f7fd6; font-size: 14px; font-weight: 700; }
.ime-dot { color: #1f7fd6; font-size: 14px; font-weight: 700; width: 14px; }
</style>

<style>
html, body { margin: 0; background: #f0f0f0; }
</style>
